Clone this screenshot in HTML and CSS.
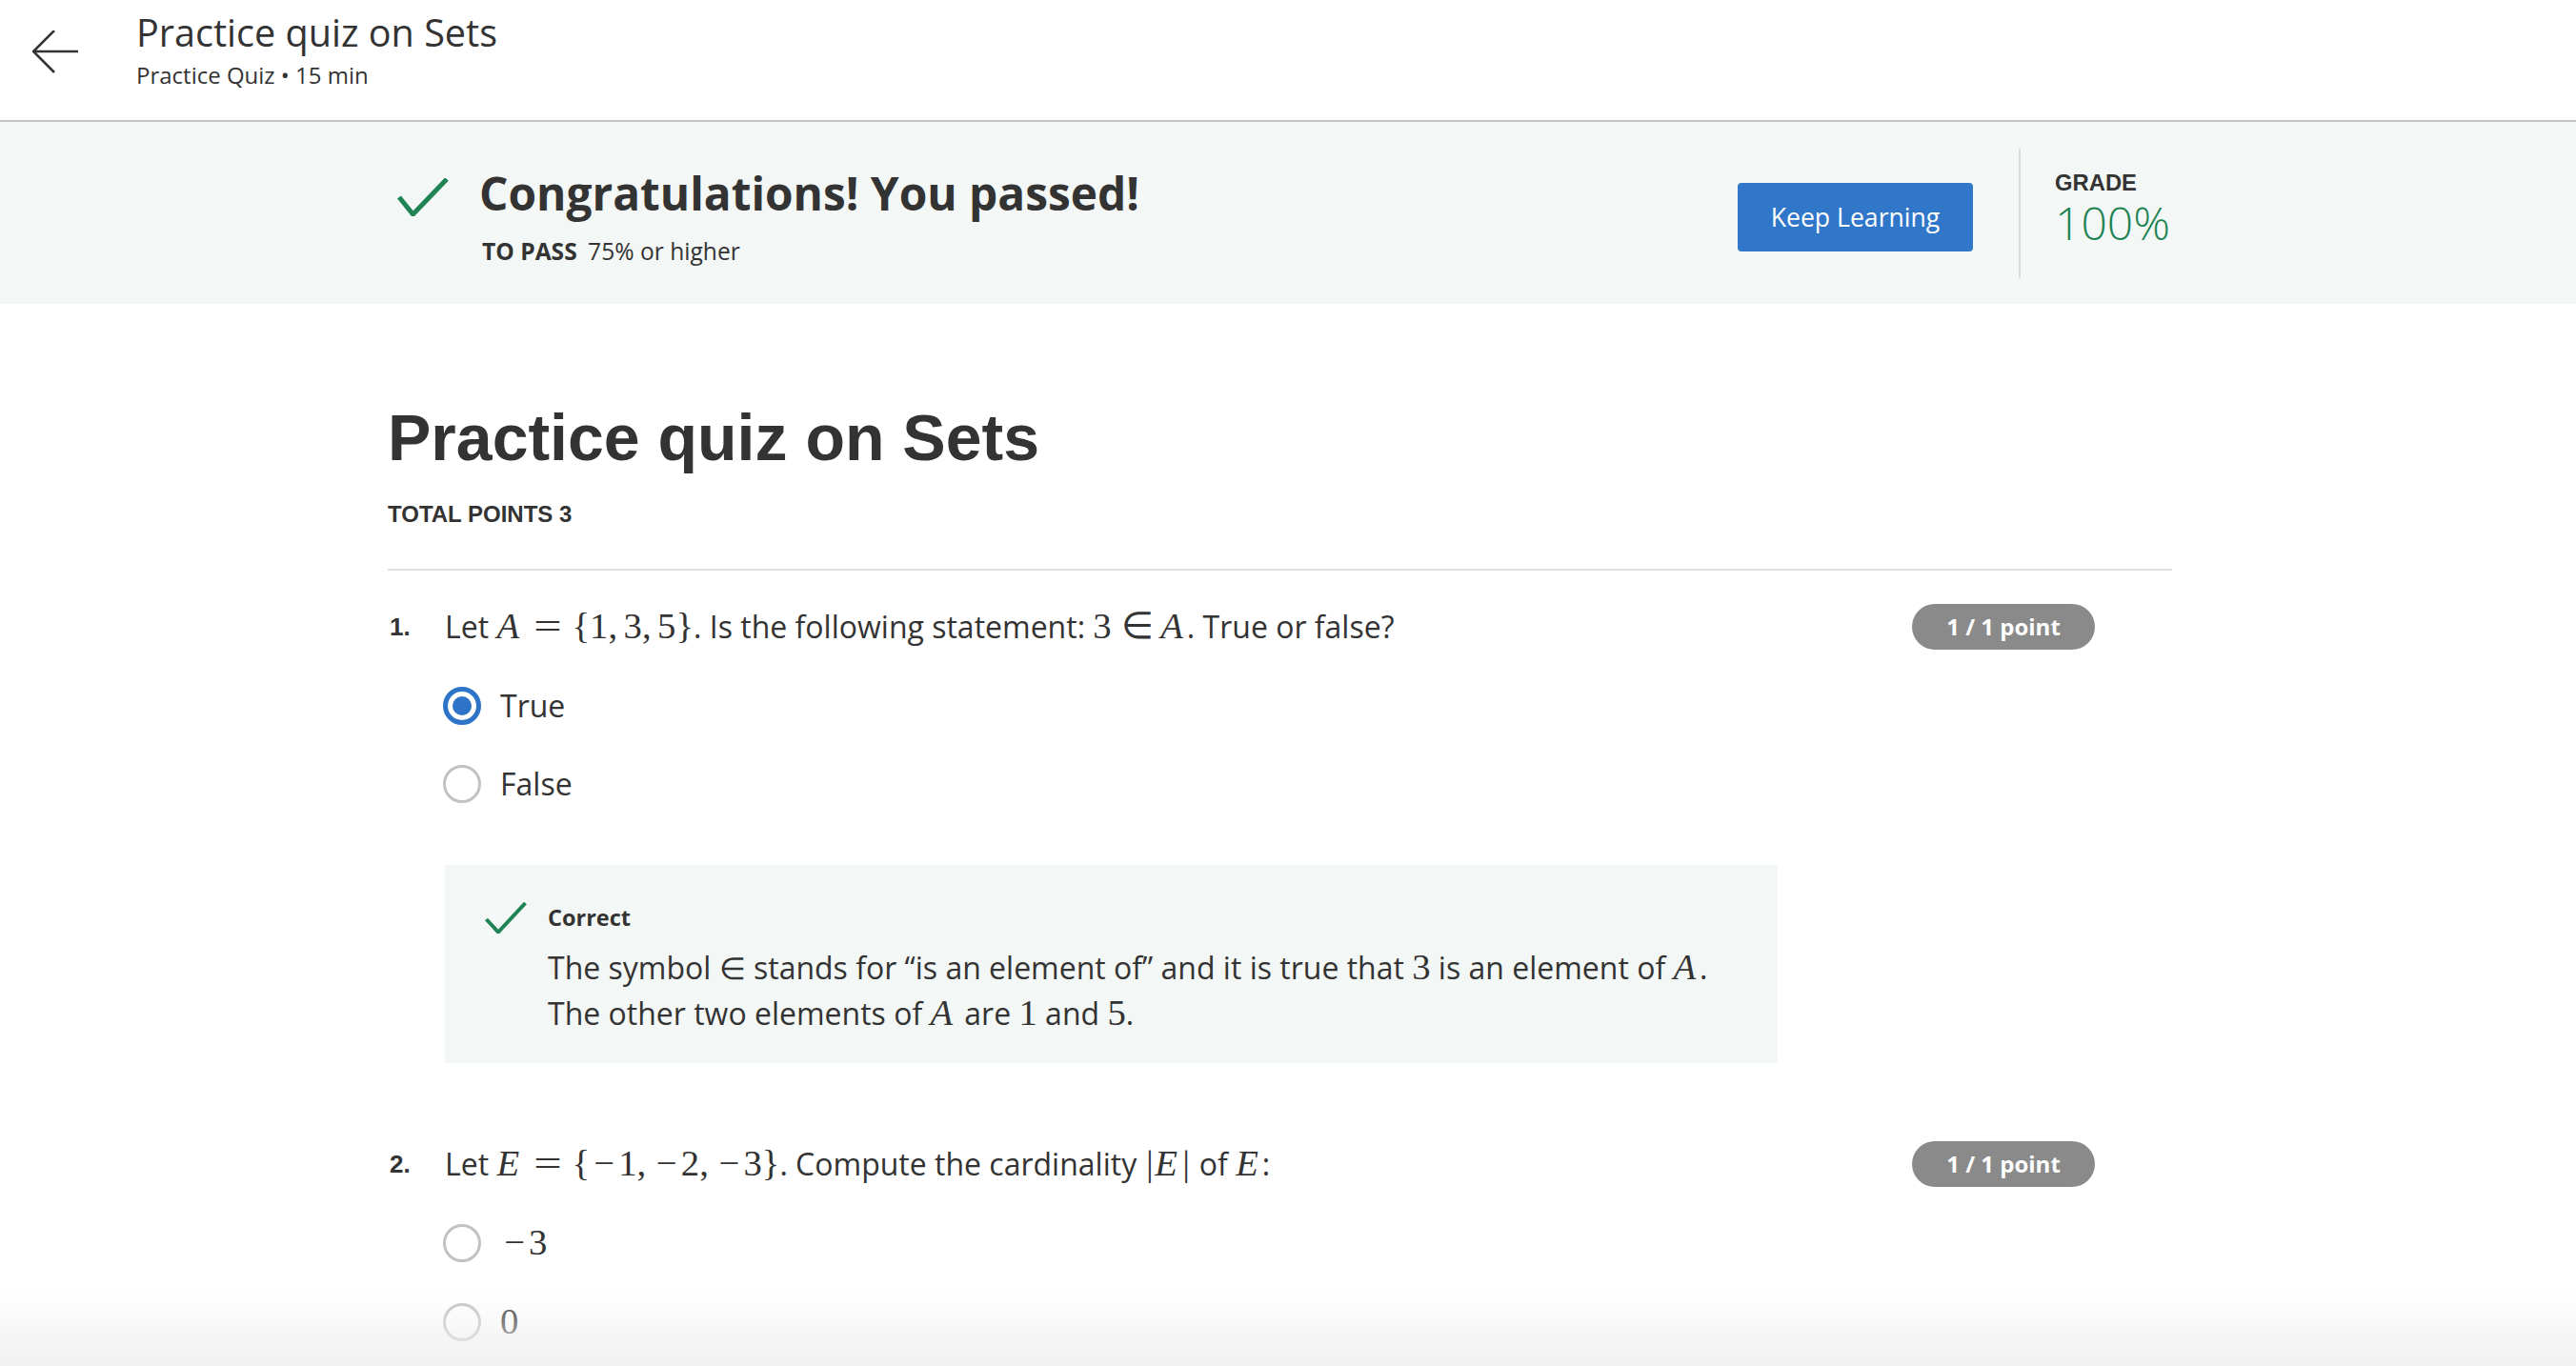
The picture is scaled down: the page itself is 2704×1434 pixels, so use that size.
FILE: index.html
```html
<!DOCTYPE html>
<html lang="en">
<head>
<meta charset="utf-8">
<title>Practice quiz on Sets</title>
<link rel="stylesheet" href="styles.css">
</head>
<body>
<header class="topbar">
  <a class="back" href="#" aria-label="Back">
    <svg width="48" height="48" viewBox="0 0 48 48"><path d="M48 22H1M23 0L1 22L23 44" fill="none" stroke="#333" stroke-width="2.6"/></svg>
  </a>
  <div class="top-titles">
    <div class="top-title">Practice quiz on Sets</div>
    <div class="top-sub">Practice Quiz • 15 min</div>
  </div>
</header>

<section class="banner">
  <div class="container banner-inner">
    <svg class="banner-check" width="54" height="40" viewBox="0 0 54 40"><path d="M2 20L16.5 38L52 1" fill="none" stroke="#1f8354" stroke-width="5"/></svg>
    <div class="banner-text">
      <h2 class="congrats">Congratulations! You passed!</h2>
      <div class="to-pass"><b>TO PASS</b> 75% or higher</div>
    </div>
    <button class="keep">Keep Learning</button>
    <div class="divider"></div>
    <div class="grade">
      <div class="grade-label">GRADE</div>
      <div class="grade-value">100%</div>
    </div>
  </div>
</section>

<main class="container main">
  <h1 class="quiz-title">Practice quiz on Sets</h1>
  <div class="total">TOTAL POINTS 3</div>
  <hr class="rule">

  <div class="question">
    <div class="q-num">1.</div>
    <div class="q-body">
      <div class="q-head">
        <div class="q-text">Let <span class="m"><i>A</i><span class="rel eq">=</span>{1,<span class="th"></span>3,<span class="th"></span>5}</span>. Is the following statement: <span class="m">3<span class="rel">∈</span><i>A</i></span>. True or false?</div>
        <div class="badge">1 / 1 point</div>
      </div>
      <div class="option first"><span class="radio checked"></span><span class="opt-label">True</span></div>
      <div class="option"><span class="radio"></span><span class="opt-label">False</span></div>
      <div class="feedback">
        <svg class="fb-check" width="44" height="33" viewBox="0 0 44 33"><path d="M1.5 18L14 31.5L42.5 1" fill="none" stroke="#1f8354" stroke-width="4"/></svg>
        <div class="fb-content">
          <div class="fb-title">Correct</div>
          <div class="fb-text">The symbol ∈ stands for “is an element of” and it is true that <span class="m">3</span> is an element of <span class="m"><i>A</i></span>.<br>The other two elements of <span class="m"><i>A</i></span> are <span class="m">1</span> and <span class="m">5</span>.</div>
        </div>
      </div>
    </div>
  </div>

  <div class="question q2">
    <div class="q-num">2.</div>
    <div class="q-body">
      <div class="q-head">
        <div class="q-text">Let <span class="m"><i>E</i><span class="rel eq">=</span>{<span class="minus">−</span>1,<span class="th"></span><span class="minus">−</span>2,<span class="th"></span><span class="minus">−</span>3}</span>. Compute the cardinality <span class="m"><span class="bar">|</span><i>E</i><span class="bar">|</span></span> of <span class="m"><i>E</i></span>:</div>
        <div class="badge">1 / 1 point</div>
      </div>
      <div class="option first"><span class="radio"></span><span class="opt-label"><span class="m"><span class="minus">−</span>3</span></span></div>
      <div class="option"><span class="radio"></span><span class="opt-label"><span class="m">0</span></span></div>
    </div>
  </div>
</main>
<div class="bottom-fade"></div>
</body>
</html>
```

FILE: styles.css
```css
html, body {
  margin: 0;
  padding: 0;
  background: #ffffff;
  color: #333333;
  font-family: "Open Sans", "Liberation Sans", sans-serif;
}

.container {
  width: 1873px;
  margin-left: 407px;
  box-sizing: border-box;
}

/* top bar */
.topbar {
  display: flex;
  align-items: flex-start;
  height: 126px;
  border-bottom: 2px solid #c4c6c5;
}
.back {
  display: block;
  width: 48px;
  height: 48px;
  margin-left: 34px;
  margin-top: 32px;
}
.back svg { display: block; }
.top-titles {
  margin-left: 61px;
  padding-top: 10px;
}
.top-title {
  font-size: 39.6px;
  line-height: 48px;
  color: #333;
}
.top-sub {
  margin-top: 5px;
  font-size: 24px;
  line-height: 32px;
  color: #333;
}

/* banner */
.banner {
  background: #f3f8f6;
  height: 191px;
}
.banner-inner {
  display: flex;
  align-items: flex-start;
  height: 191px;
}
.banner-check {
  display: block;
  margin-left: 10px;
  margin-top: 59px;
  flex: none;
}
.banner-text {
  margin-left: 32px;
  margin-top: 47px;
}
.congrats {
  margin: 0;
  font-size: 47.8px;
  line-height: 56px;
  font-weight: 700;
  color: #333;
}
.to-pass {
  margin-top: 17px;
  margin-left: 3px;
  font-size: 24.6px;
  line-height: 32px;
  color: #333;
}
.to-pass b {
  font-weight: 700;
  margin-right: 5px;
}
.keep {
  margin-left: auto;
  margin-top: 64px;
  width: 247px;
  height: 72px;
  border: none;
  border-radius: 4px;
  background: #3077c9;
  color: #ffffff;
  font-family: "Open Sans", sans-serif;
  font-size: 26.6px;
  padding: 0;
}
.divider {
  margin-left: 48px;
  margin-top: 28px;
  width: 2px;
  height: 136px;
  background: #dcdcdc;
}
.grade {
  margin-left: 36px;
  margin-top: 50px;
  width: 123px;
}
.grade-label {
  font-family: "Liberation Sans", Arial, sans-serif;
  font-weight: 700;
  font-size: 23.8px;
  line-height: 28px;
  color: #333;
}
.grade-value {
  font-size: 48px;
  line-height: 56px;
  font-weight: 300;
  color: #1f8354;
}

/* main */
.main {
  padding-top: 100px;
  padding-bottom: 120px;
}
.quiz-title {
  margin: 0;
  font-family: "Liberation Sans", Arial, sans-serif;
  font-weight: 700;
  font-size: 68px;
  line-height: 80px;
  color: #333;
}
.total {
  margin-top: 27px;
  font-family: "Liberation Sans", Arial, sans-serif;
  font-weight: 700;
  font-size: 24px;
  line-height: 28px;
  color: #333;
}
.rule {
  margin: 43px 0 0 0;
  border: none;
  height: 2px;
  background: #e1e1e1;
}

.question {
  display: flex;
  margin-top: 35px;
}
.q2 { margin-top: 82px; }
.q-num {
  width: 60px;
  flex: none;
  font-family: "Liberation Sans", Arial, sans-serif;
  font-weight: 700;
  font-size: 26px;
  line-height: 48px;
  padding-left: 2px;
  box-sizing: border-box;
  color: #333;
}
.q-body { flex: 1; }
.q-head {
  display: flex;
  justify-content: space-between;
  align-items: flex-start;
  padding-right: 81px;
}
.q-text {
  font-size: 32px;
  line-height: 48px;
  color: #333;
}
.badge {
  flex: none;
  width: 192px;
  height: 48px;
  border-radius: 24px;
  background: #8a8a8a;
  color: #ffffff;
  font-weight: 700;
  font-size: 24px;
  line-height: 48px;
  text-align: center;
}

/* math */
.m {
  font-family: "Liberation Serif", "Times New Roman", serif;
  font-size: 1.21em;
  line-height: 1;
}
.m i { font-style: italic; padding-right: 0.1em; }
.m .rel {
  display: inline-block;
  width: 0.778em;
  text-align: center;
  margin: 0 0.2778em;
}
.m .rel.eq { transform: scaleX(1.35); }
.m .th { display: inline-block; width: 0.1667em; }
.m .minus {
  display: inline-block;
  width: 0.778em;
  text-align: center;
}
.m .bar {
  display: inline-block;
  width: 0.278em;
  text-align: center;
}

/* options */
.option {
  display: flex;
  align-items: center;
  height: 48px;
  margin-top: 34px;
}
.option.first { margin-top: 35px; }
.q2 .option { margin-top: 35px; }
.radio {
  box-sizing: border-box;
  width: 40px;
  height: 40px;
  border-radius: 50%;
  border: 3px solid #c2c2c2;
  background: #fff;
  margin-left: -2px;
  flex: none;
  position: relative;
}
.radio.checked {
  border: 5px solid #2d74c8;
}
.radio.checked::after {
  content: "";
  position: absolute;
  left: 5px;
  top: 5px;
  width: 20px;
  height: 20px;
  border-radius: 50%;
  background: #2d74c8;
}
.opt-label {
  margin-left: 20px;
  font-size: 32px;
  line-height: 48px;
  color: #333;
}

/* feedback */
.feedback {
  display: flex;
  align-items: flex-start;
  margin-top: 61px;
  width: 1399px;
  height: 208px;
  box-sizing: border-box;
  background: #f3f8f6;
  padding-top: 39px;
}
.fb-check {
  display: block;
  flex: none;
  margin-left: 42px;
}
.fb-content {
  margin-left: 22px;
  padding-top: 2px;
}
.fb-title {
  font-weight: 700;
  font-size: 23.5px;
  line-height: 28px;
  color: #333;
}
.fb-text {
  margin-top: 15px;
  font-size: 32px;
  line-height: 48px;
  color: #333;
}

.bottom-fade {
  position: fixed;
  left: 0;
  right: 0;
  bottom: 0;
  height: 80px;
  background: linear-gradient(to bottom, rgba(240,240,240,0), rgba(240,240,240,0.95));
  pointer-events: none;
}
```
